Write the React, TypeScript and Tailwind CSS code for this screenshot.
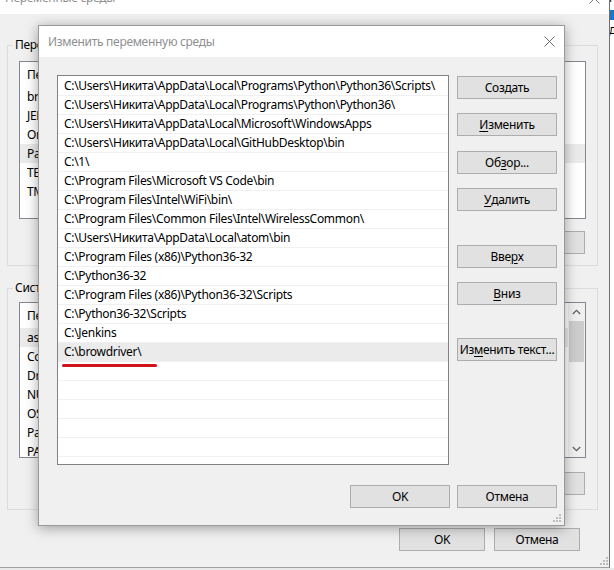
import React from "react";

const paths = [
  "C:\\Users\\Никита\\AppData\\Local\\Programs\\Python\\Python36\\Scripts\\",
  "C:\\Users\\Никита\\AppData\\Local\\Programs\\Python\\Python36\\",
  "C:\\Users\\Никита\\AppData\\Local\\Microsoft\\WindowsApps",
  "C:\\Users\\Никита\\AppData\\Local\\GitHubDesktop\\bin",
  "C:\\1\\",
  "C:\\Program Files\\Microsoft VS Code\\bin",
  "C:\\Program Files\\Intel\\WiFi\\bin\\",
  "C:\\Program Files\\Common Files\\Intel\\WirelessCommon\\",
  "C:\\Users\\Никита\\AppData\\Local\\atom\\bin",
  "C:\\Program Files (x86)\\Python36-32",
  "C:\\Python36-32",
  "C:\\Program Files (x86)\\Python36-32\\Scripts",
  "C:\\Python36-32\\Scripts",
  "C:\\Jenkins",
  "C:\\browdriver\\",
];

const userVars = ["browdriver", "JENKINS_HOME", "OneDrive", "Path", "TEMP", "TMP"];
const sysVars = ["asl.log", "ComSpec", "DriverData", "NUMBER_OF_PROCESSORS", "OS", "Path", "PATHEXT"];

function Btn({ children, className = "" }: { children: React.ReactNode; className?: string }) {
  return (
    <div
      className={`flex h-[23px] shrink-0 items-center justify-center border border-[#adadad] bg-[#e1e1e1] text-[12px] leading-[16px] whitespace-nowrap text-black ${className}`}
    >
      {children}
    </div>
  );
}

function U({ children }: { children: React.ReactNode }) {
  return <span className="underline decoration-1 underline-offset-[2px]">{children}</span>;
}

function CloseX({ color = "#767676" }: { color?: string }) {
  return (
    <svg width="11" height="11" viewBox="0 0 11 11" className="shrink-0">
      <path d="M0.5 0.5 L10.5 10.5 M10.5 0.5 L0.5 10.5" stroke={color} strokeWidth="1" fill="none" />
    </svg>
  );
}

function Grip() {
  return (
    <svg width="8" height="8" viewBox="0 0 8 8">
      <rect x="6" y="0" width="2" height="2" fill="#bdbdbd" />
      <rect x="3" y="3" width="2" height="2" fill="#bdbdbd" />
      <rect x="6" y="3" width="2" height="2" fill="#bdbdbd" />
      <rect x="0" y="6" width="2" height="2" fill="#bdbdbd" />
      <rect x="3" y="6" width="2" height="2" fill="#bdbdbd" />
      <rect x="6" y="6" width="2" height="2" fill="#bdbdbd" />
    </svg>
  );
}

function VarList({ items, selected, heightClass, scroll }: { items: string[]; selected: number; heightClass: string; scroll?: boolean }) {
  return (
    <div className={`flex w-[567px] overflow-hidden border border-[#828790] bg-white ${heightClass}`}>
      <div className="flex min-w-0 flex-1 flex-col">
        <div className="flex h-[25px] shrink-0 items-center pl-[7px] text-black">
          <span className="w-[170px]">Переменная</span>
          <span>Значение</span>
        </div>
        {items.map((v, i) => (
          <div
            key={v}
            className={`flex h-[19px] shrink-0 items-center pl-[7px] text-black ${i === selected ? "bg-[#ebebeb]" : ""}`}
          >
            {v}
          </div>
        ))}
      </div>
      {scroll && (
        <div className="flex w-[17px] shrink-0 flex-col items-center bg-[#f0f0f0]">
          <div className="flex h-[18px] w-full items-center justify-center">
            <svg width="9" height="6" viewBox="0 0 9 6">
              <path d="M0.8 5 L4.5 1.3 L8.2 5" stroke="#606060" strokeWidth="1.3" fill="none" />
            </svg>
          </div>
          <div className="h-[41px] w-[15px] bg-[#cdcdcd]" />
          <div className="flex-1" />
          <div className="flex h-[17px] w-full items-center justify-center">
            <svg width="9" height="6" viewBox="0 0 9 6">
              <path d="M0.8 1 L4.5 4.7 L8.2 1" stroke="#606060" strokeWidth="1.3" fill="none" />
            </svg>
          </div>
        </div>
      )}
    </div>
  );
}

export default function App() {
  const emptyRows = Array.from({ length: 7 });
  return (
    <div className="relative h-[570px] w-[614px] overflow-hidden bg-[#e9e9e9] font-['Segoe_UI','Noto_Sans',sans-serif] text-[12px] leading-[16px] tracking-[-0.3px]">
      <div className="flex">
        {/* background window */}
        <div className="relative flex h-[568px] w-[610px] shrink-0 flex-col border-r border-b border-r-[#6f6f6f] border-b-[#a0a0a0] bg-[#f0f0f0]">
          <div className="flex h-[14px] shrink-0 items-start overflow-hidden bg-white pl-[5px] pr-[9px]">
            <span className="-mt-[10px] text-[#8f8f8f]">Переменные среды</span>
            <div className="ml-auto -mt-[7px]">
              <CloseX />
            </div>
          </div>

          <div className="flex flex-col pt-[23px]">
            <fieldset className="ml-[7px] w-[591px] border border-[#dcdcdc] px-[11px] pt-[8px] pb-[11px]">
              <legend className="-ml-[6px] px-[2px] leading-[16px] text-black">Переменные среды пользователя для Никита</legend>
              <VarList items={userVars} selected={3} heightClass="h-[158px]" />
              <div className="mt-[12px] flex justify-end gap-[8px] pr-[1px]">
                <Btn className="w-[86px]">Создать...</Btn>
                <Btn className="w-[86px]">Изменить...</Btn>
                <Btn className="w-[86px]">Удалить</Btn>
              </div>
            </fieldset>

            <fieldset className="mt-[14px] ml-[7px] w-[591px] border border-[#dcdcdc] px-[11px] pt-[6px] pb-[14px]">
              <legend className="-ml-[6px] px-[2px] leading-[16px] text-black">Системные переменные</legend>
              <VarList items={sysVars} selected={0} heightClass="h-[156px]" scroll />
              <div className="mt-[14px] flex justify-end gap-[8px] pr-[1px]">
                <Btn className="w-[86px]">Создать...</Btn>
                <Btn className="w-[86px]">Изменить...</Btn>
                <Btn className="w-[86px]">Удалить</Btn>
              </div>
            </fieldset>

            <div className="mt-[18px] flex justify-end gap-[9px] pr-[29px]">
              <Btn className="w-[86px]">OK</Btn>
              <Btn className="w-[86px]">Отмена</Btn>
            </div>
          </div>

          <div className="absolute right-[1px] bottom-[2px]">
            <Grip />
          </div>
        </div>

        {/* sliver of another window at right */}
        <div className="flex h-[568px] flex-1 flex-col overflow-hidden bg-white">
          <span className="-mt-[9px] -ml-[1px] leading-[14px] text-black">н</span>
          <div className="mt-[5px] h-[10px] bg-[#1a78c8]" />
          <span className="mt-[3px] -ml-[1px] leading-[14px] text-black">д</span>
        </div>
      </div>

      {/* foreground dialog */}
      <div className="absolute left-[38px] top-[25px] w-[527px] border border-[#9a9a9a] bg-[#f0f0f0] shadow-[0_2px_12px_rgba(0,0,0,0.35)]">
        <div className="flex h-[31px] items-center bg-white pl-[9px] pr-[9px]">
          <span className="text-[#8f8f8f]">Изменить переменную среды</span>
          <div className="ml-auto">
            <CloseX color="#6e6e6e" />
          </div>
        </div>

        <div className="relative flex flex-col pt-[18px] pr-[7px] pb-[17px] pl-[18px]">
          <div className="flex gap-[8px]">
            <div className="relative flex h-[390px] w-[392px] flex-col overflow-hidden border border-[#828282] bg-white pt-[1px]">
              {paths.map((p, i) => (
                <div
                  key={p}
                  className={`flex h-[19px] shrink-0 items-center border-b border-[#f0f0f0] pl-[6px] whitespace-nowrap text-black ${i === 14 ? "bg-[#ebebeb]" : ""}`}
                >
                  {p}
                </div>
              ))}
              {emptyRows.map((_, i) => (
                <div key={i} className="h-[19px] shrink-0 border-b border-[#f0f0f0]" />
              ))}
              <div className="absolute left-[4px] top-[288px] h-[3px] w-[95px] rounded-full bg-[#d0141c]" />
            </div>

            <div className="mt-[1px] flex w-[100px] flex-col">
              <Btn>Создать</Btn>
              <Btn className="mt-[14px]">
                <U>И</U>зменить
              </Btn>
              <Btn className="mt-[15px]">
                Об<U>з</U>ор...
              </Btn>
              <Btn className="mt-[14px]">
                <U>У</U>далить
              </Btn>
              <Btn className="mt-[34px]">
                Вве<U>р</U>х
              </Btn>
              <Btn className="mt-[14px]">
                <U>В</U>низ
              </Btn>
              <Btn className="mt-[33px]">
                Из<U>м</U>енить текст...
              </Btn>
            </div>
          </div>

          <div className="mt-[20px] flex justify-end gap-[7px]">
            <Btn className="w-[100px]">OK</Btn>
            <Btn className="w-[100px]">Отмена</Btn>
          </div>

          <div className="absolute right-[3px] bottom-[3px]">
            <Grip />
          </div>
        </div>
      </div>
    </div>
  );
}
